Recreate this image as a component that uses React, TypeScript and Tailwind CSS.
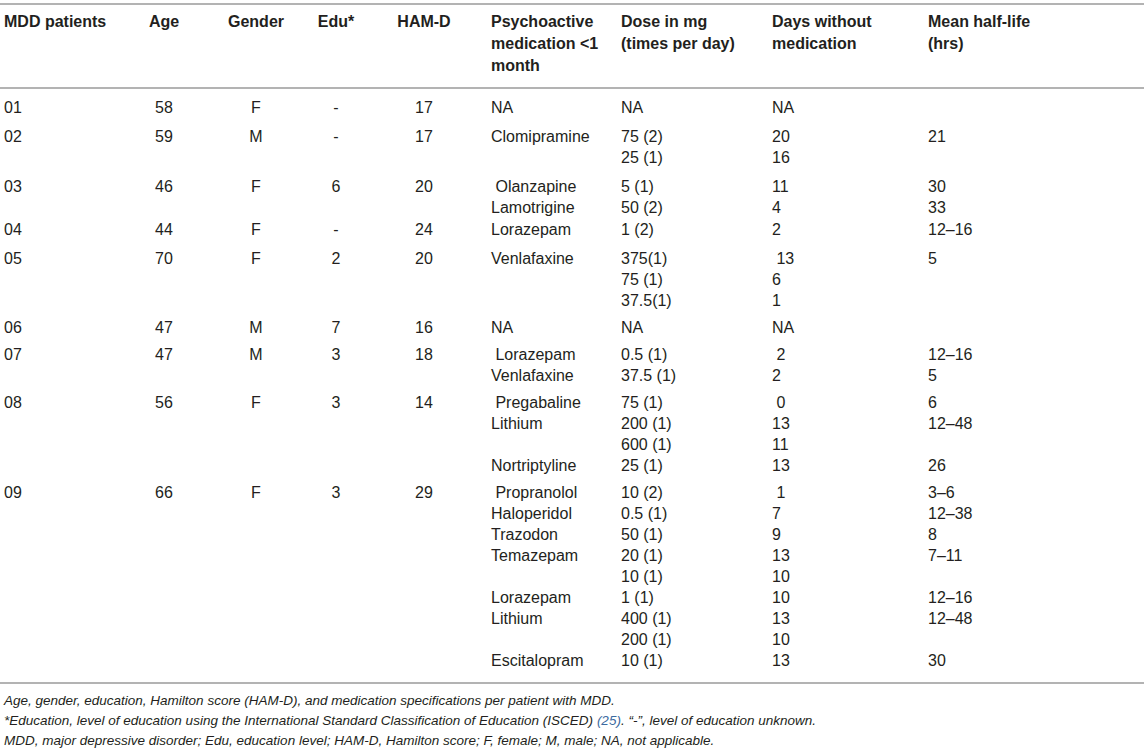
import React from "react";

type Row = {
  id: string;
  age: string;
  gender: string;
  edu: string;
  ham: string;
  med: string[];
  dose: string[];
  days: string[];
  hl: string[];
  mt: string;
};

const NB = "\u00a0";

const rows: Row[] = [
  { id: "01", age: "58", gender: "F", edu: "-", ham: "17", med: ["NA"], dose: ["NA"], days: ["NA"], hl: [""], mt: "mt-[7.5px]" },
  { id: "02", age: "59", gender: "M", edu: "-", ham: "17", med: ["Clomipramine"], dose: ["75 (2)", "25 (1)"], days: ["20", "16"], hl: ["21"], mt: "mt-[8px]" },
  { id: "03", age: "46", gender: "F", edu: "6", ham: "20", med: [NB + "Olanzapine", "Lamotrigine"], dose: ["5 (1)", "50 (2)"], days: ["11", "4"], hl: ["30", "33"], mt: "mt-[8px]" },
  { id: "04", age: "44", gender: "F", edu: "-", ham: "24", med: ["Lorazepam"], dose: ["1 (2)"], days: ["2"], hl: ["12–16"], mt: "mt-[1.5px]" },
  { id: "05", age: "70", gender: "F", edu: "2", ham: "20", med: ["Venlafaxine"], dose: ["375(1)", "75 (1)", "37.5(1)"], days: [NB + "13", "6", "1"], hl: ["5"], mt: "mt-[7.5px]" },
  { id: "06", age: "47", gender: "M", edu: "7", ham: "16", med: ["NA"], dose: ["NA"], days: ["NA"], hl: [""], mt: "mt-[6px]" },
  { id: "07", age: "47", gender: "M", edu: "3", ham: "18", med: [NB + "Lorazepam", "Venlafaxine"], dose: ["0.5 (1)", "37.5 (1)"], days: [NB + "2", "2"], hl: ["12–16", "5"], mt: "mt-[6.5px]" },
  { id: "08", age: "56", gender: "F", edu: "3", ham: "14", med: [NB + "Pregabaline", "Lithium", "", "Nortriptyline"], dose: ["75 (1)", "200 (1)", "600 (1)", "25 (1)"], days: [NB + "0", "13", "11", "13"], hl: ["6", "12–48", "", "26"], mt: "mt-[5.5px]" },
  {
    id: "09", age: "66", gender: "F", edu: "3", ham: "29",
    med: [NB + "Propranolol", "Haloperidol", "Trazodon", "Temazepam", "", "Lorazepam", "Lithium", "", "Escitalopram"],
    dose: ["10 (2)", "0.5 (1)", "50 (1)", "20 (1)", "10 (1)", "1 (1)", "400 (1)", "200 (1)", "10 (1)"],
    days: [NB + "1", "7", "9", "13", "10", "10", "13", "10", "13"],
    hl: ["3–6", "12–38", "8", "7–11", "", "12–16", "12–48", "", "30"],
    mt: "mt-[6px]",
  },
];

const GRID = "grid grid-cols-[120px_80px_104px_56px_127px_130px_151px_156px_1fr] pl-[4px]";

function Lines({ items }: { items: string[] }) {
  return (
    <div className="flex flex-col">
      {items.map((t, i) => (
        <div key={i} className="h-[21px] whitespace-pre">
          {t || NB}
        </div>
      ))}
    </div>
  );
}

export default function App() {
  return (
    <div className="w-[1144px] h-[750px] bg-white text-[#231f20] font-['Liberation_Sans',Arial,sans-serif] overflow-hidden">
      <div className="pt-[3px]">
        <div className="border-t-2 border-[#b3b3b3]" />
        <div className={`${GRID} pt-[6px] pb-[10px] text-[16px] leading-[22px] font-bold`}>
          <div>MDD patients</div>
          <div className="text-center">Age</div>
          <div className="text-center">Gender</div>
          <div className="text-center">Edu*</div>
          <div className="text-center pr-[7px]">HAM-D</div>
          <div>
            Psychoactive
            <br />
            medication &lt;1
            <br />
            month
          </div>
          <div>
            Dose in mg
            <br />
            (times per day)
          </div>
          <div>
            Days without
            <br />
            medication
          </div>
          <div>
            Mean half-life
            <br />
            (hrs)
          </div>
        </div>
        <div className="border-t-2 border-[#b3b3b3]" />
        <div className="flex flex-col text-[16px] leading-[21px]">
          {rows.map((r) => (
            <div key={r.id} className={`${GRID} ${r.mt}`}>
              <div>{r.id}</div>
              <div className="text-center">{r.age}</div>
              <div className="text-center">{r.gender}</div>
              <div className="text-center">{r.edu}</div>
              <div className="text-center pr-[7px]">{r.ham}</div>
              <Lines items={r.med} />
              <Lines items={r.dose} />
              <Lines items={r.days} />
              <Lines items={r.hl} />
            </div>
          ))}
        </div>
        <div className="mt-[11px] border-t-2 border-[#b3b3b3]" />
        <div className="pl-[4px] mt-[7px] text-[13.5px] leading-[20px] italic">
          <div>Age, gender, education, Hamilton score (HAM-D), and medication specifications per patient with MDD.</div>
          <div>
            *Education, level of education using the International Standard Classification of Education (ISCED){" "}
            <span className="text-[#3b6aa0]">(25)</span>. “-”, level of education unknown.
          </div>
          <div>MDD, major depressive disorder; Edu, education level; HAM-D, Hamilton score; F, female; M, male; NA, not applicable.</div>
        </div>
      </div>
    </div>
  );
}
